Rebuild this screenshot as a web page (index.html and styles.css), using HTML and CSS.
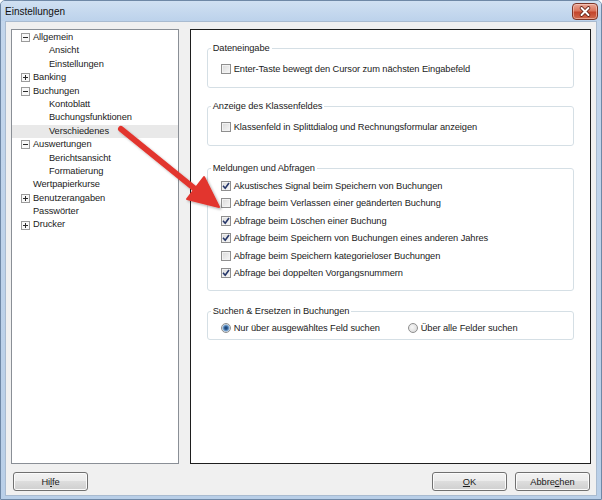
FILE: index.html
```html
<!DOCTYPE html>
<html lang="de">
<head>
<meta charset="utf-8">
<title>Einstellungen</title>
<link rel="stylesheet" href="styles.css">
</head>
<body>
<div class="window">
  <div class="titlebar">
    <span class="title">Einstellungen</span>
    <span class="close">
      <svg width="26" height="17" viewBox="0 0 26 17">
        <path d="M9.5 5L16.5 12M16.5 5L9.5 12" stroke="#5a1a10" stroke-width="3.6" stroke-linecap="round"/>
        <path d="M9.5 5L16.5 12M16.5 5L9.5 12" stroke="#ffffff" stroke-width="2" stroke-linecap="round"/>
      </svg>
    </span>
  </div>
  <div class="client">
    <div class="main">
      <div class="tree">
        <div class="node top"><svg class="exp" width="9" height="9" viewBox="0 0 9 9"><rect x=".5" y=".5" width="8" height="8" fill="#f8f8f8" stroke="#9b9b9b"/><path d="M2 4.5h5" stroke="#2a2a2a"/></svg><span>Allgemein</span></div>
        <div class="node child">Ansicht</div>
        <div class="node child">Einstellungen</div>
        <div class="node top"><svg class="exp" width="9" height="9" viewBox="0 0 9 9"><rect x=".5" y=".5" width="8" height="8" fill="#f8f8f8" stroke="#9b9b9b"/><path d="M2 4.5h5M4.5 2v5" stroke="#2a2a2a"/></svg><span>Banking</span></div>
        <div class="node top"><svg class="exp" width="9" height="9" viewBox="0 0 9 9"><rect x=".5" y=".5" width="8" height="8" fill="#f8f8f8" stroke="#9b9b9b"/><path d="M2 4.5h5" stroke="#2a2a2a"/></svg><span>Buchungen</span></div>
        <div class="node child">Kontoblatt</div>
        <div class="node child">Buchungsfunktionen</div>
        <div class="node child selected">Verschiedenes</div>
        <div class="node top"><svg class="exp" width="9" height="9" viewBox="0 0 9 9"><rect x=".5" y=".5" width="8" height="8" fill="#f8f8f8" stroke="#9b9b9b"/><path d="M2 4.5h5" stroke="#2a2a2a"/></svg><span>Auswertungen</span></div>
        <div class="node child">Berichtsansicht</div>
        <div class="node child">Formatierung</div>
        <div class="node leaf">Wertpapierkurse</div>
        <div class="node top"><svg class="exp" width="9" height="9" viewBox="0 0 9 9"><rect x=".5" y=".5" width="8" height="8" fill="#f8f8f8" stroke="#9b9b9b"/><path d="M2 4.5h5M4.5 2v5" stroke="#2a2a2a"/></svg><span>Benutzerangaben</span></div>
        <div class="node leaf">Passwörter</div>
        <div class="node top"><svg class="exp" width="9" height="9" viewBox="0 0 9 9"><rect x=".5" y=".5" width="8" height="8" fill="#f8f8f8" stroke="#9b9b9b"/><path d="M2 4.5h5M4.5 2v5" stroke="#2a2a2a"/></svg><span>Drucker</span></div>
      </div>
      <div class="panel">
        <div class="group g1">
          <div class="legend">Dateneingabe</div>
          <div class="rows">
            <div class="row"><span class="cb"></span><span>Enter-Taste bewegt den Cursor zum nächsten Eingabefeld</span></div>
          </div>
        </div>
        <div class="group g2">
          <div class="legend">Anzeige des Klassenfeldes</div>
          <div class="rows">
            <div class="row"><span class="cb"></span><span>Klassenfeld in Splittdialog und Rechnungsformular anzeigen</span></div>
          </div>
        </div>
        <div class="group g3">
          <div class="legend">Meldungen und Abfragen</div>
          <div class="rows">
            <div class="row"><span class="cb"><svg width="8" height="8" viewBox="0 0 8 8"><path d="M1 3.8L3.2 6.2L7 1" fill="none" stroke="#26376a" stroke-width="1.6"/></svg></span><span>Akustisches Signal beim Speichern von Buchungen</span></div>
            <div class="row"><span class="cb"></span><span>Abfrage beim Verlassen einer geänderten Buchung</span></div>
            <div class="row"><span class="cb"><svg width="8" height="8" viewBox="0 0 8 8"><path d="M1 3.8L3.2 6.2L7 1" fill="none" stroke="#26376a" stroke-width="1.6"/></svg></span><span>Abfrage beim Löschen einer Buchung</span></div>
            <div class="row"><span class="cb"><svg width="8" height="8" viewBox="0 0 8 8"><path d="M1 3.8L3.2 6.2L7 1" fill="none" stroke="#26376a" stroke-width="1.6"/></svg></span><span>Abfrage beim Speichern von Buchungen eines anderen Jahres</span></div>
            <div class="row"><span class="cb"></span><span>Abfrage beim Speichern kategorieloser Buchungen</span></div>
            <div class="row"><span class="cb"><svg width="8" height="8" viewBox="0 0 8 8"><path d="M1 3.8L3.2 6.2L7 1" fill="none" stroke="#26376a" stroke-width="1.6"/></svg></span><span>Abfrage bei doppelten Vorgangsnummern</span></div>
          </div>
        </div>
        <div class="group g4">
          <div class="legend">Suchen &amp; Ersetzen in Buchungen</div>
          <div class="rows">
            <div class="row radios">
              <span class="opt opt1"><span class="rb on"></span><span>Nur über ausgewähltes Feld suchen</span></span>
              <span class="opt"><span class="rb"></span><span>Über alle Felder suchen</span></span>
            </div>
          </div>
        </div>
      </div>
    </div>
    <div class="buttons">
      <button class="btn">Hi<u>l</u>fe</button>
      <span class="spacer"></span>
      <button class="btn"><u>O</u>K</button>
      <button class="btn">Abbre<u>c</u>hen</button>
    </div>
  </div>
  <svg class="arrow" width="602" height="500" viewBox="0 0 602 500">
    <defs>
      <filter id="sh" x="-20%" y="-20%" width="140%" height="140%">
        <feDropShadow dx="1.5" dy="1.5" stdDeviation="1.2" flood-color="#000" flood-opacity="0.3"/>
      </filter>
    </defs>
    <g filter="url(#sh)">
      <path d="M121 129L200 193" stroke="#e2362f" stroke-width="6" stroke-linecap="round"/>
      <polygon points="219,207 187,199 204,177" fill="#e2362f" stroke="#e2362f" stroke-width="2" stroke-linejoin="round"/>
    </g>
  </svg>
</div>
</body>
</html>
```

FILE: styles.css
```css
* { box-sizing: border-box; }

html, body {
  margin: 0;
  padding: 0;
  background: #ffffff;
}

body {
  font-family: "Liberation Sans", Arial, sans-serif;
  font-size: 9.3px;
  letter-spacing: -0.08px;
  color: #1b1b1b;
}

.window {
  position: relative;
  width: 602px;
  height: 500px;
  border: 1px solid #6f88a6;
  border-radius: 5px 5px 0 0;
  background: linear-gradient(#c3d6ec, #b9cfe8);
  display: flex;
  flex-direction: column;
  overflow: hidden;
}

.titlebar {
  height: 20px;
  flex: 0 0 20px;
  display: flex;
  align-items: center;
  padding-left: 4px;
  padding-right: 3px;
  background: linear-gradient(#d0e0f2, #bcd2eb);
}

.title {
  font-size: 10px;
  letter-spacing: 0;
  color: #111;
}

.close {
  margin-left: auto;
  width: 26px;
  height: 17px;
  border: 1px solid #7b3427;
  border-radius: 4px;
  background: linear-gradient(#eaa796 0%, #da765e 45%, #c4452c 55%, #d06a4f 100%);
  display: flex;
  box-shadow: inset 0 0 0 1px rgba(255, 220, 210, 0.5);
}

.close svg {
  margin: -1px;
}

.client {
  flex: 1;
  margin: 0 4px 3px 4px;
  border: 1px solid #a9bbd0;
  background: #f0f0f0;
  padding: 7px 5px 4px 5px;
  display: flex;
  flex-direction: column;
}

.main {
  height: 435px;
  display: flex;
  gap: 11px;
}

.tree {
  width: 168px;
  background: #ffffff;
  border: 1px solid #8a8f96;
  padding-top: 1px;
}

.node {
  height: 13.4px;
  line-height: 13.4px;
  display: flex;
  align-items: center;
  white-space: nowrap;
}

.node.top { padding-left: 9px; }
.node.leaf { padding-left: 21px; }
.node.child { padding-left: 37px; }

.node.selected {
  background: #e9e9e9;
}

.exp {
  flex: 0 0 9px;
  margin-right: 3px;
}

.panel {
  width: 402px;
  background: #ffffff;
  border: 1px solid #1e1e1e;
  padding: 18px 16px 0 16px;
}

.group {
  border: 1px solid #d5dfe5;
  border-radius: 3px;
  display: flex;
  flex-direction: column;
}

.legend {
  align-self: flex-start;
  margin: -7px 0 0 3px;
  padding: 0 2px;
  height: 13px;
  line-height: 13px;
  background: #ffffff;
}

.g1 .rows { padding: 5px 0 10px; }
.g2 { margin-top: 18px; }
.g2 .rows { padding: 5px 0 10px; }
.g3 { margin-top: 22px; }
.g3 .rows { padding: 2px 0 8px; }
.g3 .row { height: 17.5px; }
.g4 { margin-top: 20px; }
.g4 .rows { padding: 1px 0 3px; }

.row {
  height: 17px;
  display: flex;
  align-items: center;
  padding-left: 13px;
  white-space: nowrap;
}

.cb {
  width: 10px;
  height: 10px;
  flex: 0 0 10px;
  margin-right: 3px;
  border: 1px solid #8f8f8f;
  background: linear-gradient(135deg, #d9d9d9, #f7f7f7);
  box-shadow: inset 0 0 0 1px #f2f2f2;
  display: flex;
  align-items: center;
  justify-content: center;
}

.opt {
  display: flex;
  align-items: center;
}

.opt1 {
  width: 187px;
}

.rb {
  width: 10px;
  height: 10px;
  flex: 0 0 10px;
  margin-right: 3px;
  border: 1px solid #8f8f8f;
  border-radius: 50%;
  background: radial-gradient(circle at 40% 40%, #f7f7f7, #d4d4d4);
}

.rb.on {
  background: radial-gradient(circle at 50% 50%, #173a66 0, #2f5d93 1.5px, #7eaad6 3px, #e8e8e8 4px);
}

.buttons {
  margin-top: 8px;
  height: 19px;
  display: flex;
  gap: 8px;
  padding: 0 1px 0 2px;
}

.spacer {
  flex: 1;
}

.btn {
  width: 75px;
  height: 19px;
  padding: 0;
  font-family: "Liberation Sans", Arial, sans-serif;
  font-size: 9.3px;
  letter-spacing: -0.08px;
  color: #1b1b1b;
  border: 1px solid #707070;
  border-radius: 3px;
  background: linear-gradient(#f2f2f2 0%, #ebebeb 50%, #dddddd 50%, #cfcfcf 100%);
  box-shadow: inset 0 0 0 1px #fbfbfb;
}

.btn u {
  text-decoration-thickness: 1px;
  text-underline-offset: 1px;
}

.arrow {
  position: absolute;
  left: -1px;
  top: -1px;
  pointer-events: none;
}
```
